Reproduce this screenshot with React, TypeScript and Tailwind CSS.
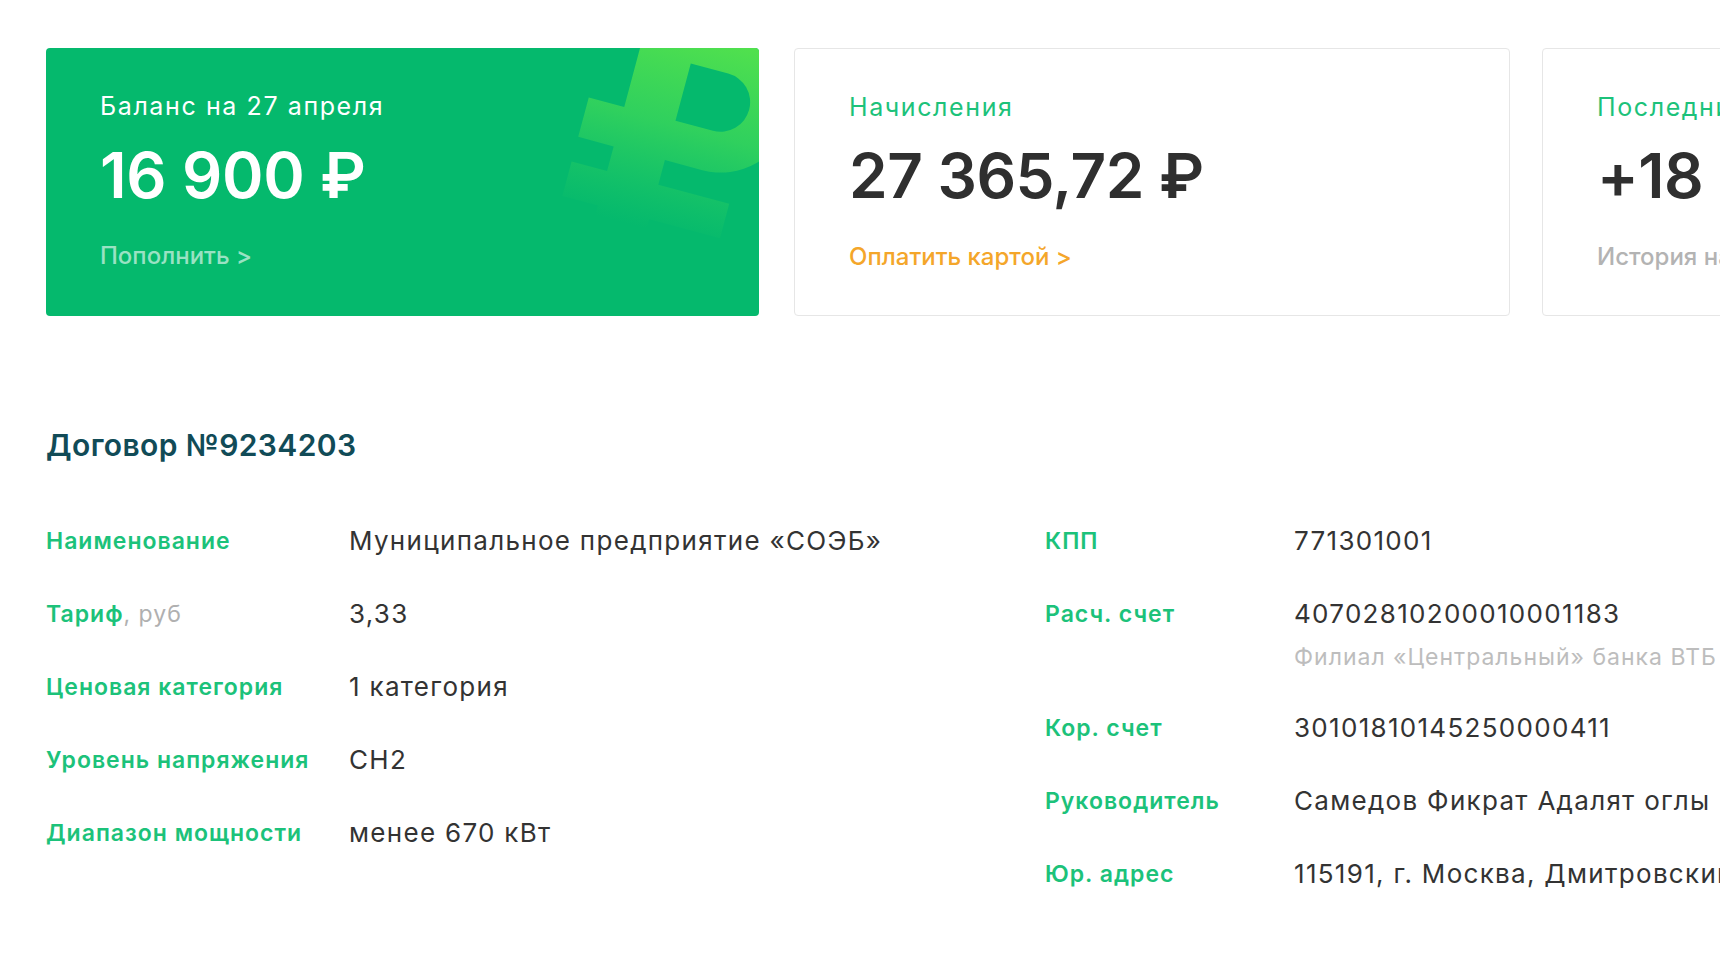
import React from 'react';

const font = { fontFamily: 'Inter, "Noto Sans", sans-serif' };

interface Row {
  label: string;
  unit?: string;
  value: string;
  note?: string;
}

const leftRows: Row[] = [
  { label: 'Наименование', value: 'Муниципальное предприятие «СОЭБ»' },
  { label: 'Тариф', unit: ', руб', value: '3,33' },
  { label: 'Ценовая категория', value: '1 категория' },
  { label: 'Уровень напряжения', value: 'СН2' },
  { label: 'Диапазон мощности', value: 'менее 670 кВт' },
];

const rightRows: Row[] = [
  { label: 'КПП', value: '771301001' },
  { label: 'Расч. счет', value: '40702810200010001183', note: 'Филиал «Центральный» банка ВТБ (ПАО)' },
  { label: 'Кор. счет', value: '30101810145250000411' },
  { label: 'Руководитель', value: 'Самедов Фикрат Адалят оглы' },
  { label: 'Юр. адрес', value: '115191, г. Москва, Дмитровский проезд, д. 10' },
];

// big tilted ruble sign in the corner of the balance card
const RubleMark = () => (
  <svg className="absolute top-0 right-0" width="260" height="268" viewBox="0 0 260 268">
    <defs>
      <linearGradient id="rubGrad" x1="0" y1="0" x2="0" y2="210" gradientUnits="userSpaceOnUse">
        <stop offset="0" stopColor="#56e34b" stopOpacity="1" />
        <stop offset="0.5" stopColor="#3ad65a" stopOpacity="0.8" />
        <stop offset="1" stopColor="#2ccf62" stopOpacity="0" />
      </linearGradient>
    </defs>
    <g transform="translate(210 50) rotate(15) scale(1.02) translate(-78 -70)" fill="url(#rubGrad)">
      <path
        fillRule="evenodd"
        d="M0 0 H90 A70 70 0 0 1 90 140 H52 V165 H124 V200 H52 V250 H0 V200 H-36 V165 H0 V140 H-36 V100 H0 Z M52 42 V100 H90 A29 29 0 0 0 90 42 Z"
      />
    </g>
  </svg>
);

const Card = ({
  title,
  amount,
  link,
  titleClass,
  linkClass,
}: {
  title: string;
  amount: string;
  link: string;
  titleClass: string;
  linkClass: string;
}) => (
  <div className="w-[716px] h-[268px] shrink-0 rounded-[4px] border border-[#e6e6e6] bg-white pl-[54px] pt-[42px] overflow-hidden">
    <div className={`text-[25px] leading-[32px] tracking-[1.6px] whitespace-nowrap ${titleClass}`}>{title}</div>
    <div className="mt-[17px] text-[62px] leading-[72px] font-semibold text-[#2f2f2f] tracking-[-0.5px] whitespace-nowrap">
      {amount}
    </div>
    <div className={`mt-[30px] text-[24px] leading-[30px] font-medium whitespace-nowrap ${linkClass}`}>{link}</div>
  </div>
);

const DetailRow = ({ row, labelWidth }: { row: Row; labelWidth: string }) => (
  <div className="flex pb-[41px]">
    <div className={`${labelWidth} shrink-0 text-[23px] leading-[32px] font-semibold tracking-[1px] text-[#1cc27a]`}>
      {row.label}
      {row.unit && <span className="font-normal text-[#b0b0b0]">{row.unit}</span>}
    </div>
    <div className="whitespace-nowrap">
      <div className="text-[26px] leading-[32px] tracking-[1.3px] text-[#333333]">{row.value}</div>
      {row.note && (
        <div className="mt-[13px] text-[23px] leading-[28px] tracking-[1px] text-[#bdbdbd]">{row.note}</div>
      )}
    </div>
  </div>
);

export default function App() {
  return (
    <div className="w-[1720px] h-[960px] overflow-hidden bg-white pl-[46px] pt-[48px]" style={font}>
      {/* summary cards */}
      <div className="flex gap-8">
        <div className="relative w-[713px] mr-[3px] h-[268px] shrink-0 rounded-[4px] bg-[#05b96d] pl-[54px] pt-[42px] overflow-hidden">
          <RubleMark />
          <div className="relative text-[25px] leading-[32px] tracking-[1.6px] text-white">Баланс на 27 апреля</div>
          <div className="relative mt-[17px] text-[63px] leading-[72px] font-semibold text-white tracking-[-0.3px]">
            16 900 ₽
          </div>
          <div className="relative mt-[30px] text-[24px] leading-[30px] font-medium text-white/60">Пополнить &gt;</div>
        </div>
        <Card
          title="Начисления"
          amount="27 365,72 ₽"
          link="Оплатить картой >"
          titleClass="text-[#1cc27a]"
          linkClass="text-[#f4a62a]"
        />
        <Card
          title="Последний платеж"
          amount="+18 000 ₽"
          link="История начислений >"
          titleClass="text-[#1cc27a]"
          linkClass="text-[#b3b3b3]"
        />
      </div>

      {/* contract */}
      <h2 className="mt-[111px] text-[30px] leading-[36px] font-semibold tracking-[0.4px] text-[#114b57]">
        Договор №9234203
      </h2>

      <div className="mt-[62px] flex">
        <div className="w-[999px] shrink-0">
          {leftRows.map((r) => (
            <DetailRow key={r.label} row={r} labelWidth="w-[303px]" />
          ))}
        </div>
        <div>
          {rightRows.map((r) => (
            <DetailRow key={r.label} row={r} labelWidth="w-[249px]" />
          ))}
        </div>
      </div>
    </div>
  );
}
